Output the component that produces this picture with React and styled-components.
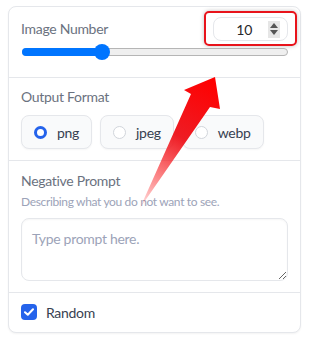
import React from "react";
import styled, { createGlobalStyle } from "styled-components";

const Global = createGlobalStyle`
  html, body { margin: 0; padding: 0; background: #ffffff; }
  body { font-family: Lato, "Noto Sans", sans-serif; letter-spacing: -0.3px; }
`;

const Page = styled.div`
  position: relative;
  width: 309px;
  height: 344px;
  padding: 6px 0 0 8px;
  box-sizing: border-box;
`;

const Card = styled.div`
  width: 293px;
  box-sizing: border-box;
  border: 1px solid #e5e7eb;
  border-radius: 8px;
  background: #fff;
  box-shadow: 0 1px 2px rgba(0, 0, 0, 0.05);
`;

const Section = styled.div`
  padding: ${(p) => p.$pad || "10px 12px"};
  border-top: ${(p) => (p.$first ? "none" : "1px solid #e5e7eb")};
  display: flex;
  flex-direction: column;
  gap: ${(p) => p.$gap || "8px"};
`;

const Label = styled.div`
  font-size: 14px;
  line-height: 20px;
  color: #6b7280;
`;

const Hint = styled.div`
  font-size: 12px;
  line-height: 16px;
  letter-spacing: -0.35px;
  color: #9ca3b8;
  margin-top: -5px;
`;

const HeaderRow = styled.div`
  display: flex;
  align-items: center;
  justify-content: space-between;
  height: 24px;
`;

const NumberWrap = styled.div`
  position: relative;
  width: 75px;
  height: 24px;
`;

const NumberBox = styled.div`
  box-sizing: border-box;
  width: 100%;
  height: 100%;
  border: 1px solid #e5e7eb;
  border-radius: 8px;
  display: flex;
  align-items: center;
  justify-content: flex-end;
  padding-right: 7px;
  gap: 16px;
  font-size: 14px;
  color: #27272a;
`;

const Spinner = styled.div`
  width: 12px;
  height: 17px;
  background: #e6e6e6;
  display: flex;
  flex-direction: column;
  align-items: center;
  justify-content: center;
  gap: 2px;
`;

const Highlight = styled.div`
  position: absolute;
  left: -9px;
  top: -6px;
  right: -9px;
  bottom: -5px;
  border: 2px solid #e8131b;
  border-radius: 5px;
  box-shadow: 0 0 4px rgba(0, 0, 0, 0.25);
  pointer-events: none;
`;

const SliderBox = styled.div`
  height: 14px;
  display: flex;
  align-items: center;
`;

const SliderTrack = styled.div`
  position: relative;
  height: 8px;
  margin-left: 1px;
  box-sizing: border-box;
  border: 1px solid #b5b5b5;
  border-radius: 5px;
  background: #efefef;
  width: 266px;
`;

const SliderFill = styled.div`
  position: absolute;
  left: -1px;
  top: -1px;
  bottom: -1px;
  background: #0075ff;
  border-radius: 5px 0 0 5px;
`;

const SliderThumb = styled.div`
  position: absolute;
  top: 50%;
  width: 16px;
  height: 16px;
  margin: -8px 0 0 -8px;
  border-radius: 50%;
  background: #0075ff;
`;

const RadioRow = styled.div`
  display: flex;
  gap: 8px;
`;

const RadioItem = styled.label`
  display: flex;
  align-items: center;
  gap: 10px;
  height: 34px;
  box-sizing: border-box;
  padding: 0 12px 0 12px;
  border: 1px solid #e5e7eb;
  border-radius: 8px;
  background: #f9fafb;
  box-shadow: 0 1px 2px rgba(0, 0, 0, 0.04);
  font-size: 14px;
  color: #374151;
`;

const RadioDot = styled.span`
  width: 13px;
  height: 13px;
  box-sizing: border-box;
  border-radius: 50%;
  background: #fff;
  border: ${(p) => (p.$checked ? "3.5px solid #2563eb" : "1px solid #d1d5db")};
`;

const TextArea = styled.textarea`
  display: block;
  width: 267px;
  height: 63px;
  box-sizing: border-box;
  border: 1px solid #e5e7eb;
  border-radius: 8px;
  padding: 10px 10px;
  font-family: Lato, "Noto Sans", sans-serif;
  font-size: 14px;
  line-height: 20px;
  letter-spacing: -0.3px;
  resize: vertical;
  outline: none;
  box-shadow: 0 1px 2px rgba(0, 0, 0, 0.04) inset;
  &::placeholder {
    color: #9ca3b8;
  }
`;

const CheckRow = styled.label`
  display: flex;
  align-items: center;
  gap: 9px;
  font-size: 14px;
  color: #374151;
  height: 16px;
`;

const CheckBox = styled.span`
  width: 16px;
  height: 16px;
  border-radius: 4px;
  background: #2563eb;
  display: flex;
  align-items: center;
  justify-content: center;
`;

const ArrowLayer = styled.svg`
  position: absolute;
  left: 0;
  top: 0;
  pointer-events: none;
`;

export default function App() {
  const value = 10;
  const pct = 30;
  return (
    <>
      <Global />
      <Page>
        <Card>
          <Section $first $pad="10px 12px 18px" $gap="4px">
            <HeaderRow>
              <Label>Image Number</Label>
              <NumberWrap>
                <NumberBox>
                  <span>{value}</span>
                  <Spinner>
                    <svg width="8" height="5" viewBox="0 0 8 5">
                      <path d="M4 0 L8 5 L0 5 Z" fill="#555" />
                    </svg>
                    <svg width="8" height="5" viewBox="0 0 8 5">
                      <path d="M0 0 L8 0 L4 5 Z" fill="#555" />
                    </svg>
                  </Spinner>
                </NumberBox>
                <Highlight />
              </NumberWrap>
            </HeaderRow>
            <SliderBox>
              <SliderTrack>
                <SliderFill style={{ width: `${pct}%` }} />
                <SliderThumb style={{ left: `${pct}%` }} />
              </SliderTrack>
            </SliderBox>
          </Section>
          <Section $pad="9px 12px 11px" $gap="8px">
            <Label>Output Format</Label>
            <RadioRow>
              <RadioItem>
                <RadioDot $checked />
                png
              </RadioItem>
              <RadioItem>
                <RadioDot />
                jpeg
              </RadioItem>
              <RadioItem>
                <RadioDot />
                webp
              </RadioItem>
            </RadioRow>
          </Section>
          <Section $pad="10px 12px 11px" $gap="8px">
            <Label>Negative Prompt</Label>
            <Hint>Describing what you do not want to see.</Hint>
            <TextArea placeholder="Type prompt here." />
          </Section>
          <Section $pad="11px 12px 12px">
            <CheckRow>
              <CheckBox>
                <svg width="10" height="8" viewBox="0 0 10 8">
                  <path d="M1 4.2 L3.8 6.8 L9 1.2" stroke="#fff" strokeWidth="2" fill="none" strokeLinecap="round" strokeLinejoin="round" />
                </svg>
              </CheckBox>
              Random
            </CheckRow>
          </Section>
        </Card>
        <ArrowLayer width="309" height="344" viewBox="0 0 309 344">
          <defs>
            <linearGradient id="ag" x1="215" y1="80" x2="140" y2="208" gradientUnits="userSpaceOnUse">
              <stop offset="0" stopColor="#ff0000" />
              <stop offset="0.45" stopColor="#ee1c24" />
              <stop offset="1" stopColor="#ff0000" stopOpacity="0.1" />
            </linearGradient>
          </defs>
          <polygon points="215,77 184,90 191,94 140,208 210,107 220,109" fill="url(#ag)" />
        </ArrowLayer>
      </Page>
    </>
  );
}
